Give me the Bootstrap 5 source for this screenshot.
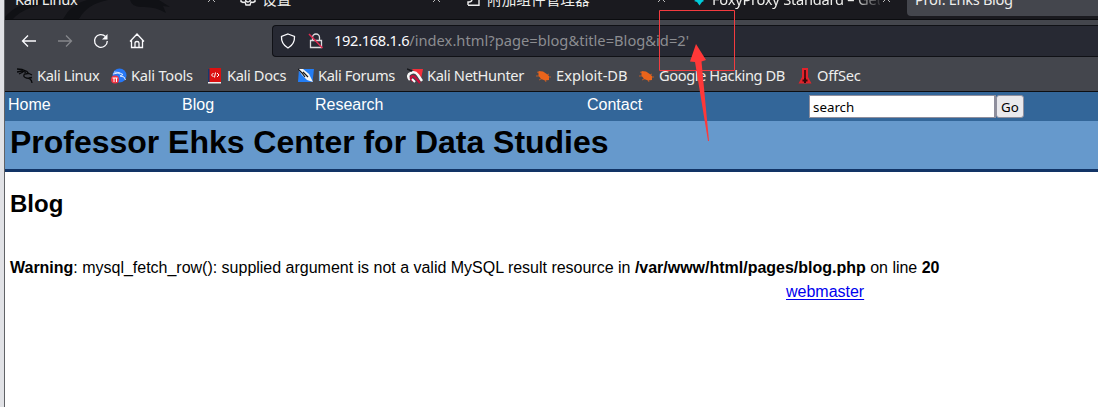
<!DOCTYPE html>
<html lang="en">
<head>
<meta charset="utf-8">
<title>Prof. Ehks Blog</title>
<link href="https://cdn.jsdelivr.net/npm/bootstrap@5.3.0/dist/css/bootstrap.min.css" rel="stylesheet">
<style>
body{height:407px;overflow:hidden;background:#fff;color:#000;font:16px/1.5 "Liberation Sans",Arial,sans-serif}
.shell{height:407px;border-left:4px solid #e1e2e6}
.frame{border-left:1px solid #606266}
.chrome{height:92px;background:#44464d;border-bottom:1px solid #0d0e11;font:14.67px/20px "Noto Sans","Noto Sans CJK SC",sans-serif;color:#eeeeec}
.tabs{height:20px;background:#1a1a1f;border-bottom:1px solid #0b0c0f;overflow:hidden}
.tabs .art{left:0;top:0}
.tab{height:19px;flex:none;line-height:20px;white-space:nowrap}
.tab span{margin-top:-11px;height:20px}
.tab svg{flex:none}
.w1{width:225px;padding-left:10px}.w2{width:227px;padding-left:10px}.w3{width:225px;padding-left:10px}.w4{width:225px;padding-left:10px}
.tab .x{margin-left:auto;margin-right:14px}
.w2 .x{margin-right:16px}.w3 .x{margin-right:16px}.w4 .x{margin-right:16px}
.active-tab{height:16px;width:200px;background:#44464d;border-radius:0 0 0 4px;padding-left:8px}
.fade-t{width:168px;overflow:hidden;letter-spacing:-.25px;-webkit-mask-image:linear-gradient(90deg,#000 140px,transparent 172px);mask-image:linear-gradient(90deg,#000 140px,transparent 172px)}
.tight{letter-spacing:-.36px}
.tools{height:41px}
.navicons{width:267px;padding-left:16px;gap:20px}
.url{height:32px;background:#272933;border:1px solid #101116;border-right:0;border-radius:4px 0 0 4px;padding-left:7px;color:#8c8d91}
.url b{font-weight:400;color:#fbfbfe;letter-spacing:-.33px}
.url span{padding-bottom:2px;letter-spacing:.02px}
.url .lock{margin-left:12px;margin-right:10px}
.marks{height:30px}
.bm{flex:none;gap:4px;white-space:nowrap;letter-spacing:-.36px;line-height:18px;padding-bottom:2px}
.bm svg{flex:none;margin-top:2px}
.sitebar{height:29px;background:#336699;color:#fff;line-height:26px}
.sitebar a{color:#fff;text-decoration:none;flex:none}
.search-in{width:187px;height:23px;border:1px solid #8f8f9d;border-width:1px 2px 1px 1px;padding:0 3px;font:13.33px "Noto Sans",sans-serif;color:#000;background:#fff;border-radius:0}
.go{width:28px;height:23px;border:1px solid #8f8f9d;border-radius:3px;background:#e9e9ed;padding:0;font:13.33px "Noto Sans",sans-serif;color:#000}
.site-title{height:51px;background:#6699cc;border-bottom:3px solid #123466;padding-left:5px}
.site-title h1{font-size:32px;font-weight:700;line-height:42px;margin:0;letter-spacing:-.02px}
.content{padding:16px 0 0 5px}
.content h2{font-size:24px;font-weight:700;line-height:32px;margin:0 0 36px}
.content p{margin:0;line-height:24px;white-space:nowrap;letter-spacing:-.01px}
.content a{color:#0000ee;margin-left:776px;text-underline-offset:2px}
.mark-layer{left:650px;top:0;z-index:5}
</style>
</head>
<body>
<div class="shell"><div class="frame h-100">
<header class="chrome">
 <div class="tabs d-flex position-relative">
  <svg class="art position-absolute" width="220" height="19"><path d="M0 17Q12 3 35 0H60Q20 5 8 19H0zM58 19Q66 4 82 0H103Q82 4 74 19zM125 0q2 7 11 7 14-1 25 6l-3-7 7 1-11-7z" fill="#101115"/></svg>
  <div class="tab w1 d-flex position-relative"><span class="tight">Kali Linux</span><svg class="x" width="8" height="3"><path d="M0-5L7 2M7-5L0 2" stroke="#bbb"/></svg></div>
  <div class="tab w2 d-flex"><svg width="16" height="8" class="me-1"><path d="M1-1V1.500l2 1 2-.5 1 3h4l1-3 2 .5 2-1V-1M5.500-1a2.500 3 0 005 0" fill="none" stroke="#eee" stroke-width="1.4"/></svg><span style="margin-left:2px">设置</span><svg class="x" width="8" height="3"><path d="M0-5L7 2M7-5L0 2" stroke="#bbb"/></svg></div>
  <div class="tab w3 d-flex"><svg width="16" height="8" class="me-1"><path d="M1 5.2h11V-1H8M1 5V2h1q3 0 3-3" fill="none" stroke="#eee" stroke-width="1.4"/></svg><span>附加组件管理器</span><svg class="x" width="8" height="3"><path d="M0-5L7 2M7-5L0 2" stroke="#bbb"/></svg></div>
  <div class="tab w4 d-flex"><svg width="16" height="8" class="me-1"><path d="M2 1l3-2h5l2 2-2 1-2.500 3.500L5 2z" fill="#00cad8"/></svg><span class="fade-t">FoxyProxy Standard – Get this</span><svg class="x" width="8" height="3"><path d="M0-5L7 2M7-5L0 2" stroke="#bbb"/></svg></div>
  <div class="tab active-tab d-flex"><span class="tight">Prof. Ehks Blog</span></div>
 </div>
 <div class="tools d-flex align-items-center">
  <div class="navicons d-flex">
   <svg width="16" height="16" fill="none" stroke="#fbfbfe" stroke-width="1.3"><path d="M1.500 8H15M7 2.500L1.500 8 7 13.500"/></svg>
   <svg width="16" height="16" fill="none" stroke="#85868b" stroke-width="1.300"><path d="M1 8h13.500M9 2.500L14.500 8 9 13.500"/></svg>
   <svg width="16" height="16" fill="none" stroke="#fbfbfe" stroke-width="1.300"><path d="M12.500 3.500A6.400 6.400 0 1014.300 8"/><path d="M14.500 1v5.500H9z" fill="#fbfbfe" stroke="none"/></svg>
   <svg width="16" height="16" fill="none" stroke="#fbfbfe" stroke-width="1.300"><path d="M1 8.500L8 1l7 7.500M2.500 7v7.500h11V7M6 14.500V10q0-1.500 2-1.500t2 1.500v4.500"/></svg>
  </div>
  <div class="url d-flex align-items-center flex-grow-1">
   <svg width="16" height="16" fill="none" stroke="#fbfbfe" stroke-width="1.300"><path d="M8 1L14.500 3.500Q15 11 8 15 1 11 1.500 3.500z"/></svg>
   <svg class="lock" width="16" height="16" fill="none" stroke="#dcdcdf" stroke-width="1.300"><path d="M4.500 7V4.500a3.500 3.500 0 017 0V7M2.500 7.500h11v7h-11z"/><path d="M1 1l13.500 14" stroke="#e22850" stroke-width="1.500"/></svg>
   <span><b>192.168.1.6</b>/index.html?page=blog&amp;title=Blog&amp;id=2'</span>
  </div>
 </div>
 <nav class="marks d-flex align-items-center">
  <div class="bm d-flex align-items-center" style="width:94px;margin-left:12px"><svg width="16" height="16" fill="none" stroke="#08090b" stroke-width="1.300"><path d="M0 1l5 .5 5 2 1.500 2-4 .5q-2 3 2 4 5 0 5.500 5M0 4l5-1 4 1.500M2 6l4-2M11 5l4 2M12 10l3-.5"/></svg>Kali Linux</div>
  <div class="bm d-flex align-items-center" style="width:96px;letter-spacing:-.25px"><svg width="16" height="16"><circle cx="8.500" cy="7.500" r="7" fill="#2777f5"/><path d="M3 4l5 .5 4 2-3 1.500 4 1 1.500 3M2 6l5-1 2 1" fill="none" stroke="#dce9ff"/><circle cx="4" cy="11.500" r="4" fill="#f03442"/><path d="M1.500 10h5M3 10v4M5.500 10v4" stroke="#fff"/></svg>Kali Tools</div>
  <div class="bm d-flex align-items-center" style="width:91px"><svg width="16" height="16"><path d="M1 1h2v14H1z" fill="#17396f"/><path d="M2.500 0H14v14H2.500z" fill="#dc1010"/><path d="M1 14h13v1.500H1z" fill="#eee"/><path d="M6.500 5l-2 2 2 2M8.500 4.500l-1 5M10 5l2 2-2 2" fill="none" stroke="#fff"/></svg>Kali Docs</div>
  <div class="bm d-flex align-items-center" style="width:109px"><svg width="16" height="16"><path d="M1 1h15l-1.500 13H0z" fill="#237df4"/><path d="M0 1l5 0 6 5 4 8-6-2-5-5z" fill="#f5f5f5"/><path d="M0 1l4 4 3 4M5 4l5 5" stroke="#15171b" stroke-width="1.200" fill="none"/></svg>Kali Forums</div>
  <div class="bm d-flex align-items-center" style="width:129px"><svg width="16" height="16"><path d="M5 1h11l-2 10z" fill="#f32f3a"/><path d="M3 12q-4-5 1-7 4-2 7 2l4 6" fill="none" stroke="#f7f7f7" stroke-width="2.500"/><path d="M13 15L8 9q-3-2-4 0-1 2 2 4" fill="none" stroke="#c60e39" stroke-width="2.200"/><path d="M5 11l3 3" stroke="#fff" stroke-width="2"/><path d="M0 1l5 2" stroke="#15171b" stroke-width="1.500"/></svg>Kali NetHunter</div>
  <div class="bm d-flex align-items-center" style="width:103px;letter-spacing:0"><svg width="16" height="16"><path d="M2.500 3l4.500 .5 3 2 3 2.500 0 4-4 .5-4-1.500-2.500-3.500z" fill="#eb641b"/><path d="M0 8l5 0M3 12l4-2M1 4l5 2M10 14L8 9M13 6L9 8M15 9l-5 0" stroke="#eb641b" stroke-width=".7"/></svg>Exploit-DB</div>
  <div class="bm d-flex align-items-center" style="width:158px;letter-spacing:-.42px"><svg width="16" height="16"><path d="M2.500 3l4.500 .5 3 2 3 2.500 0 4-4 .5-4-1.500-2.500-3.500z" fill="#eb641b"/><path d="M0 8l5 0M3 12l4-2M1 4l5 2M10 14L8 9M13 6L9 8M15 9l-5 0" stroke="#eb641b" stroke-width=".7"/></svg>Google Hacking DB</div>
  <div class="bm d-flex align-items-center" style="letter-spacing:-.2px"><svg width="16" height="16"><path d="M5 0h6v9l3.500 6.500H1.500L5 9z" fill="#e3222b"/><path d="M8 2v9" stroke="#32070b" stroke-width="1.600"/><path d="M5.500 12.500h5M8 10v5" stroke="#32070b" stroke-width="2"/></svg>OffSec</div>
 </nav>
</header>
<nav class="sitebar d-flex">
 <a href="#" style="width:174px;margin-left:3px">Home</a><a href="#" style="width:133px">Blog</a><a href="#" style="width:272px">Research</a><a href="#" style="width:222px">Contact</a>
 <form class="d-flex" style="padding-top:3px"><input class="search-in" value="search" aria-label="search"><button type="button" class="go">Go</button></form>
</nav>
<div class="site-title"><h1>Professor Ehks Center for Data Studies</h1></div>
<main class="content">
 <h2>Blog</h2>
 <p><strong>Warning</strong>: mysql_fetch_row(): supplied argument is not a valid MySQL result resource in <strong>/var/www/html/pages/blog.php</strong> on line <strong>20</strong></p>
 <p><a href="#">webmaster</a></p>
</main>
</div></div>
<svg class="mark-layer position-absolute" width="100" height="150"><path d="M9.500 10.500h75v60h-75z" fill="none" stroke="#f33b3f"/><path d="M46 44L56 60 51.500 61.500 59 141h-1L45 62l-5-.5z" fill="#ff3838"/></svg>
</body>
</html>
